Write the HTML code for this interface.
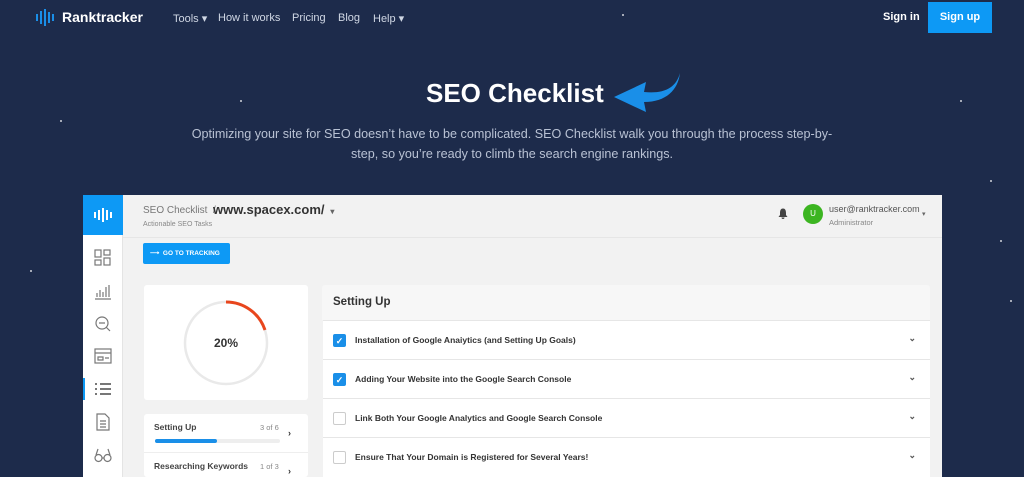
<!DOCTYPE html>
<html><head><style>
*{margin:0;padding:0;box-sizing:border-box}
body{width:1024px;height:477px;overflow:hidden;background:#1d2b4b;font-family:"Liberation Sans",sans-serif;position:relative}
.a{position:absolute}
.nav{color:#d0d7e4;font-size:11px;top:12px}
.star{position:absolute;width:2px;height:2px;background:#fff;border-radius:50%;opacity:.8}
.row{position:absolute;left:323px;width:607px;height:39px;border-top:1px solid #e6e6e6;background:#fff;font-size:8.5px;color:#333;font-weight:bold}
.row .cb{position:absolute;left:10px;top:13px;width:13px;height:13px;border:1px solid #ccc;border-radius:2px;background:#fff}
.row .cb.on{background:#1a8fe8;border-color:#1a8fe8;color:#fff;font-size:9px;text-align:center;line-height:12px}
.row .t{position:absolute;left:32px;top:14px}
.row .c{position:absolute;right:14px;top:12px;font-size:9px;color:#555}
.ic{position:absolute;left:94px;width:18px;height:18px}
</style></head><body>
<div class="star" style="left:622px;top:14px"></div><div class="star" style="left:1000px;top:240px"></div><div class="star" style="left:990px;top:180px"></div><div class="star" style="left:240px;top:100px"></div><div class="star" style="left:960px;top:100px"></div><div class="star" style="left:1010px;top:300px"></div><div class="star" style="left:30px;top:270px"></div><div class="star" style="left:60px;top:120px"></div>
<svg class="a" style="left:36px;top:9px" width="20" height="17"><g fill="#1a8fe8"><rect x="0" y="5" width="2" height="7"/><rect x="4" y="2" width="2" height="13"/><rect x="8" y="0" width="2" height="17"/><rect x="12" y="3" width="2" height="11"/><rect x="16" y="5" width="2" height="7"/></g></svg>
<div class="a" style="left:62px;top:9px;color:#fff;font-size:14px;font-weight:bold">Ranktracker</div>
<div class="a nav" style="left:173px">Tools ▾</div>
<div class="a nav" style="left:218px">How it works</div>
<div class="a nav" style="left:292px">Pricing</div>
<div class="a nav" style="left:338px">Blog</div>
<div class="a nav" style="left:373px">Help ▾</div>
<div class="a" style="left:883px;top:11px;color:#fff;font-size:11px;font-weight:bold">Sign in</div>
<div class="a" style="left:928px;top:2px;width:64px;height:31px;background:#0d99f5;color:#fff;font-size:11px;font-weight:bold;text-align:center;line-height:31px">Sign up</div>
<div class="a" style="left:426px;top:78px;color:#fff;font-size:26px;font-weight:bold">SEO Checklist</div>
<svg class="a" style="left:610px;top:70px" width="75" height="45"><path d="M70 3 C66 18 54 24 34 22 L36 12 L4 27 L36 42 L34 32 C56 32 68 20 70 3Z" fill="#1a8fe8"/></svg>
<div class="a" style="left:190px;top:124px;width:644px;text-align:center;color:#b9c2d4;font-size:12.6px;line-height:20px">Optimizing your site for SEO doesn’t have to be complicated. SEO Checklist walk you through the process step-by-<br>step, so you’re ready to climb the search engine rankings.</div>
<div class="a" style="left:83px;top:195px;width:859px;height:282px;background:#f2f2f2"></div>
<div class="a" style="left:83px;top:195px;width:40px;height:282px;background:#fff;border-right:1px solid #e4e4e4"></div>
<div class="a" style="left:83px;top:195px;width:40px;height:40px;background:#0d99f5"></div>
<svg class="a" style="left:93px;top:208px" width="20" height="14"><g fill="#fff"><rect x="1" y="4" width="2" height="6"/><rect x="5" y="2" width="2" height="10"/><rect x="9" y="0" width="2" height="14"/><rect x="13" y="2" width="2" height="10"/><rect x="17" y="4" width="2" height="6"/></g></svg>
<svg class="ic" style="top:249px" viewBox="0 0 18 18" fill="none" stroke="#777" stroke-width="1.2"><rect x="1" y="1" width="6" height="7"/><rect x="10" y="1" width="6" height="5"/><rect x="1" y="11" width="6" height="5"/><rect x="10" y="9" width="6" height="7"/></svg>
<svg class="ic" style="top:282px" viewBox="0 0 18 18" fill="none" stroke="#777" stroke-width="1.2"><path d="M1 17H17M3 15V11M6 15V8M9 15V10M12 15V5M15 15V3"/></svg>
<svg class="ic" style="top:315px" viewBox="0 0 18 18" fill="none" stroke="#777" stroke-width="1.2"><circle cx="8" cy="8" r="6"/><path d="M12 12L16 16M5 8H11"/></svg>
<svg class="ic" style="top:347px" viewBox="0 0 18 18" fill="none" stroke="#777" stroke-width="1.2"><rect x="1" y="2" width="16" height="14"/><path d="M1 6H17M4 10H9V13H4ZM11 11H15"/></svg>
<div class="a" style="left:83px;top:378px;width:2px;height:22px;background:#0d99f5"></div>
<svg class="ic" style="top:380px" viewBox="0 0 18 18" fill="none" stroke="#777" stroke-width="2"><path d="M1 4H3M6 4H17M1 9H3M6 9H17M1 14H3M6 14H17"/></svg>
<svg class="ic" style="top:413px" viewBox="0 0 18 18" fill="none" stroke="#777" stroke-width="1.2"><path d="M3 1H11L15 5V17H3Z M6 8H12M6 11H12M6 14H12"/></svg>
<svg class="ic" style="top:446px" viewBox="0 0 18 18" fill="none" stroke="#777" stroke-width="1.2"><circle cx="4.5" cy="12" r="3.5"/><circle cx="13.5" cy="12" r="3.5"/><path d="M8 12H10M2 9L4 3M16 9L14 3"/></svg>
<div class="a" style="left:143px;top:205px;font-size:10px;color:#777">SEO Checklist &nbsp;/</div>
<div class="a" style="left:213px;top:202px;font-size:13px;color:#333;font-weight:bold">www.spacex.com/ <span style="font-size:8px;color:#666">&nbsp;▾</span></div>
<div class="a" style="left:143px;top:221px;font-size:7px;color:#888">Actionable SEO Tasks</div>
<div class="a" style="left:123px;top:237px;width:819px;height:1px;background:#e6e6e6"></div>
<svg class="a" style="left:778px;top:208px" width="10" height="11"><path d="M5 0.5C2.5 0.5 2 3 2 5V7L0.5 9H9.5L8 7V5C8 3 7.5 0.5 5 0.5ZM3.5 9.5A1.5 1.5 0 0 0 6.5 9.5Z" fill="#444"/></svg>
<div class="a" style="left:803px;top:204px;width:20px;height:20px;border-radius:50%;background:#3cb521;color:#fff;font-size:8px;text-align:center;line-height:20px">U</div>
<div class="a" style="left:829px;top:204px;font-size:9px;color:#555">user@ranktracker.com</div>
<div class="a" style="left:829px;top:218px;font-size:7.5px;color:#888">Administrator</div>
<div class="a" style="left:922px;top:210px;font-size:7px;color:#666">▾</div>
<div class="a" style="left:143px;top:243px;width:87px;height:21px;background:#0d99f5;border-radius:2px;color:#fff;font-size:6.5px;font-weight:bold;line-height:21px;padding-left:7px">⟶ &nbsp;GO TO TRACKING</div>
<div class="a" style="left:144px;top:285px;width:164px;height:115px;background:#fff;border-radius:3px"></div>
<svg class="a" style="left:183px;top:300px" width="86" height="86"><circle cx="43" cy="43" r="41" fill="none" stroke="#e9e9e9" stroke-width="2.5"/><path d="M43 2 A41 41 0 0 1 82 30" fill="none" stroke="#e8461d" stroke-width="3"/></svg>
<div class="a" style="left:183px;top:336px;width:86px;text-align:center;font-size:12px;color:#333;font-weight:bold">20%</div>
<div class="a" style="left:144px;top:414px;width:164px;height:63px;background:#fff;border-radius:3px"></div>
<div class="a" style="left:154px;top:422px;font-size:8.5px;color:#444;font-weight:bold">Setting Up</div>
<div class="a" style="left:260px;top:423px;font-size:7.5px;color:#888">3 of 6</div>
<div class="a" style="left:288px;top:428px;font-size:9px;color:#333;font-weight:bold">›</div>
<div class="a" style="left:155px;top:439px;width:125px;height:4px;border-radius:2px;background:#eee"></div>
<div class="a" style="left:155px;top:439px;width:62px;height:4px;border-radius:2px;background:#1a8fe8"></div>
<div class="a" style="left:144px;top:452px;width:164px;height:1px;background:#eee"></div>
<div class="a" style="left:154px;top:461px;font-size:8.5px;color:#444;font-weight:bold">Researching Keywords</div>
<div class="a" style="left:260px;top:462px;font-size:7.5px;color:#888">1 of 3</div>
<div class="a" style="left:288px;top:466px;font-size:9px;color:#333;font-weight:bold">›</div>
<div class="a" style="left:322px;top:285px;width:608px;height:35px;background:#f7f7f7;border-radius:3px 3px 0 0"></div>
<div class="a" style="left:333px;top:296px;font-size:11.5px;color:#333;font-weight:bold">Setting Up</div>
<div class="row" style="top:320px"><div class="cb on">✓</div><div class="t">Installation of Google Anaiytics (and Setting Up Goals)</div><div class="c">⌄</div></div>
<div class="row" style="top:359px"><div class="cb on">✓</div><div class="t">Adding Your Website into the Google Search Console</div><div class="c">⌄</div></div>
<div class="row" style="top:398px"><div class="cb"></div><div class="t">Link Both Your Google Analytics and Google Search Console</div><div class="c">⌄</div></div>
<div class="row" style="top:437px;height:40px"><div class="cb"></div><div class="t">Ensure That Your Domain is Registered for Several Years!</div><div class="c">⌄</div></div>
</body></html>
